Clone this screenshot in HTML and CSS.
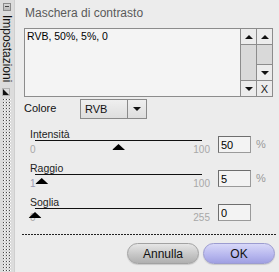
FILE: index.html
```html
<!DOCTYPE html>
<html lang="it">
<head>
    <meta charset="UTF-8">
    <title>Maschera di contrasto</title>
    <link rel="stylesheet" href="styles.css">
</head>
<body>
    <div class="window">
        <aside class="sidebar">
            <span class="collapse"></span>
            <span class="tab-label">Impostazioni</span>
            <svg class="resize" width="8" height="8" viewBox="0 0 8 8">
                <rect x="0.5" y="0.5" width="7" height="7" fill="none" stroke="#8a8a8a" stroke-dasharray="1 1"/>
                <polygon points="1,1 1,7 7,7" fill="#111"/>
            </svg>
            <div class="grip"></div>
        </aside>

        <main class="panel">
            <div class="title">Maschera di contrasto</div>

            <div class="editor">
                <div class="editor-text">RVB, 50%, 5%, 0</div>
                <div class="scroll-col">
                    <button class="sbtn top"><span class="tri-up"></span></button>
                    <div class="fill"></div>
                    <button class="sbtn bottom"><span class="tri-down"></span></button>
                </div>
                <div class="scroll-col">
                    <button class="sbtn top"><span class="tri-up"></span></button>
                    <div class="fill"></div>
                    <button class="sbtn bottom"><span class="tri-down"></span></button>
                    <button class="sbtn bottom clear">X</button>
                </div>
            </div>

            <div class="field-row">
                <span class="field-label">Colore</span>
                <div class="select">
                    <span class="select-value">RVB</span>
                    <span class="select-arrow"><span class="tri-down"></span></span>
                </div>
            </div>

            <!-- cursori: la posizione del triangolo dipende dal valore -->
            <div class="slider">
                <div class="slider-body">
                    <div class="slider-label">Intensità</div>
                    <div class="track"><span class="thumb" style="left: 50%"></span></div>
                    <div class="range"><span>0</span><span>100</span></div>
                </div>
                <input class="value" type="text" value="50">
                <span class="unit">%</span>
            </div>

            <div class="slider">
                <div class="slider-body">
                    <div class="slider-label">Raggio</div>
                    <div class="track"><span class="thumb" style="left: 4.04%"></span></div>
                    <div class="range"><span class="min-blue">1</span><span>100</span></div>
                </div>
                <input class="value" type="text" value="5">
                <span class="unit">%</span>
            </div>

            <div class="slider">
                <div class="slider-body">
                    <div class="slider-label">Soglia</div>
                    <div class="track"><span class="thumb" style="left: 0%"></span></div>
                    <div class="range"><span>0</span><span>255</span></div>
                </div>
                <input class="value" type="text" value="0">
            </div>

            <div class="divider"></div>

            <div class="actions">
                <button class="btn">Annulla</button>
                <button class="btn ok">OK</button>
            </div>
        </main>
    </div>
</body>
</html>
```

FILE: styles.css
```css
body {
    margin: 0;
    font-family: "Liberation Sans", Arial, sans-serif;
    background-color: #ececec;
    color: #111;
}
.window {
    display: flex;
    width: 279px;
    height: 272px;
    overflow: hidden;
}

/* barra laterale */
.sidebar {
    width: 15px;
    box-sizing: border-box;
    background-color: #dcdcdc;
    border-right: 1px solid #cfcfcf;
    display: flex;
    flex-direction: column;
    align-items: center;
}
.collapse {
    position: relative;
    margin-top: 3px;
    width: 8px;
    height: 8px;
    box-sizing: border-box;
    border: 1px solid #8a8a8a;
    background: linear-gradient(#d6d6d6, #b8b8b8);
}
.collapse::after {
    content: "";
    position: absolute;
    left: 1px;
    right: 1px;
    top: 2px;
    height: 1px;
    background-color: #444;
}
.tab-label {
    writing-mode: vertical-rl;
    font-size: 12px;
    line-height: 14px;
    margin-top: 4px;
    color: #111;
}
.resize {
    margin-top: 6px;
    margin-right: 2px;
}
.grip {
    flex: 1;
    width: 9px;
    margin-top: 3px;
    margin-left: 1px;
    background-image:
        linear-gradient(to bottom, transparent 0 1px, #dcdcdc 1px),
        linear-gradient(90deg, #4a4a4a 0 1px, #ffffff 1px 2px, #dcdcdc 2px);
    background-size: 3px 3px;
}

/* pannello */
.panel {
    flex: 1;
    padding: 0 6px 0 9px;
    display: flex;
    flex-direction: column;
}
.title {
    height: 28px;
    box-sizing: border-box;
    padding: 6px 0 0 1px;
    font-size: 12px;
    line-height: 14px;
    color: #5a5a5a;
}
.editor {
    height: 69px;
    box-sizing: border-box;
    border: 1px solid #8c8c8c;
    background-color: #f4f4f4;
    display: flex;
}
.editor-text {
    flex: 1;
    padding: 1px 2px;
    font-size: 10.5px;
    line-height: 13px;
    color: #000;
}
.scroll-col {
    width: 16px;
    box-sizing: border-box;
    border-left: 1px solid #8c8c8c;
    background-color: #d9d9d9;
    display: flex;
    flex-direction: column;
}
.fill {
    flex: 1;
}
.sbtn {
    height: 16px;
    padding: 0;
    border: none;
    box-sizing: border-box;
    background-color: #ececec;
    display: flex;
    align-items: center;
    justify-content: center;
    font-family: inherit;
}
.sbtn.top {
    border-bottom: 1px solid #8c8c8c;
}
.sbtn.bottom {
    border-top: 1px solid #8c8c8c;
}
.clear {
    font-size: 11px;
    color: #222;
}
.tri-up {
    width: 0;
    height: 0;
    border-left: 4px solid transparent;
    border-right: 4px solid transparent;
    border-bottom: 4px solid #111;
}
.tri-down {
    width: 0;
    height: 0;
    border-left: 4px solid transparent;
    border-right: 4px solid transparent;
    border-top: 4px solid #111;
}

/* colore */
.field-row {
    display: flex;
    margin-top: 2px;
    height: 20px;
}
.field-label {
    width: 56px;
    font-size: 11px;
    line-height: 14px;
    padding-top: 2px;
}
.select {
    width: 67px;
    height: 20px;
    box-sizing: border-box;
    border: 1px solid #8a8a8a;
    background: linear-gradient(#efefef, #dedede);
    display: flex;
}
.select-value {
    flex: 1;
    padding-left: 4px;
    font-size: 11px;
    line-height: 19px;
}
.select-arrow {
    width: 18px;
    border-left: 1px solid #8a8a8a;
    display: flex;
    align-items: center;
    justify-content: center;
}

/* cursori */
.slider {
    display: flex;
    align-items: flex-start;
    height: 34px;
}
.field-row + .slider {
    margin-top: 9px;
}
.slider-body {
    width: 180px;
    margin-left: 6px;
}
.slider-label {
    height: 12px;
    font-size: 10.5px;
    line-height: 12px;
    color: #222;
}
.track {
    position: relative;
    margin: 0 8px 0 5px;
    border-top: 1px solid #111;
}
.thumb {
    position: absolute;
    top: 3px;
    width: 13px;
    height: 6px;
    transform: translateX(-50%);
    background-color: #000;
    clip-path: polygon(50% 0, 100% 100%, 0 100%);
}
.range {
    display: flex;
    justify-content: space-between;
    margin-top: 3px;
    font-size: 10px;
    line-height: 11px;
    color: #a8a8a8;
}
.min-blue {
    color: #9a9ab4;
}
.value {
    margin: 8px 0 0 8px;
    width: 33px;
    height: 17px;
    box-sizing: border-box;
    padding: 0 2px;
    border: 1px solid #9a9a9a;
    border-top-color: #6e6e6e;
    border-left-color: #6e6e6e;
    background-color: #f3f3f3;
    font-family: inherit;
    font-size: 11px;
    color: #000;
    outline: none;
}
.unit {
    margin: 10px 0 0 5px;
    font-size: 11px;
    color: #999;
}

.divider {
    margin: 4px -3px 0 -2px;
    height: 1px;
    background-image: repeating-linear-gradient(90deg, #222 0 2px, transparent 2px 3px);
}

.actions {
    display: flex;
    justify-content: flex-end;
    gap: 4px;
    margin: 8px -2px 0 0;
}
.btn {
    width: 72px;
    height: 21px;
    padding: 0;
    border: 1px solid #a2a2a2;
    border-radius: 11px;
    background: linear-gradient(#e6e6e6, #c4c4c4 60%, #b0b0b0);
    font-family: inherit;
    font-size: 12px;
    color: #111;
    box-shadow: 0 1px 1px rgba(0, 0, 0, 0.15);
}
.btn.ok {
    border-color: #9c9cd0;
    background: linear-gradient(#d8d8f8, #b6b6ee 60%, #a0a0e2);
}
```
